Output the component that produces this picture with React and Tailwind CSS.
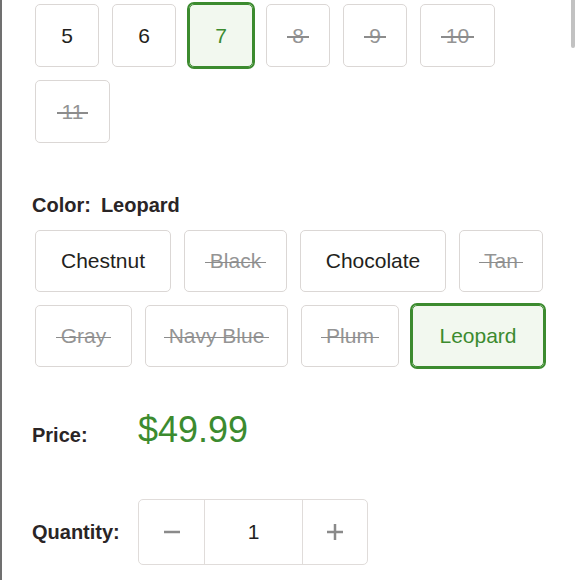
import { useState } from "react";

const sizes = [
  { label: "5", available: true, w: "w-[64px]" },
  { label: "6", available: true, w: "w-[64px]" },
  { label: "7", available: true, w: "w-[64px]" },
  { label: "8", available: false, w: "w-[64px]" },
  { label: "9", available: false, w: "w-[64px]" },
  { label: "10", available: false, w: "w-[75px]" },
  { label: "11", available: false, w: "w-[75px]" },
];

const colors = [
  { label: "Chestnut", available: true, w: "w-[136px]" },
  { label: "Black", available: false, w: "w-[103px]" },
  { label: "Chocolate", available: true, w: "w-[146px]" },
  { label: "Tan", available: false, w: "w-[84px]" },
  { label: "Gray", available: false, w: "w-[97px]" },
  { label: "Navy Blue", available: false, w: "w-[143px]" },
  { label: "Plum", available: false, w: "w-[98px]" },
  { label: "Leopard", available: true, w: "w-[132px]" },
];

function OptionButton({ label, available, selected, onClick, height, w }) {
  return (
    <button
      type="button"
      onClick={onClick}
      disabled={!available}
      className={`flex items-center justify-center rounded-[5px] border text-[21px] ${w} ${height} ${
        selected
          ? "border-[#3c8b2f] outline-2 outline-[#3c8b2f] bg-[#f2f8ef] text-[#3c8b2f]"
          : available
          ? "border-[#dbd7d5] bg-white text-[#231f20]"
          : "border-[#dbd7d5] bg-white text-[#949494]"
      }`}
    >
      {available ? (
        label
      ) : (
        <span className="relative after:absolute after:-left-[5px] after:-right-[5px] after:top-[52%] after:h-[1.5px] after:bg-[#8c8c8c]">
          {label}
        </span>
      )}
    </button>
  );
}

export default function App() {
  const [size, setSize] = useState("7");
  const [color, setColor] = useState("Leopard");
  const [qty, setQty] = useState(1);

  return (
    <div
      className="relative w-[580px] h-[580px] overflow-hidden bg-white border-l-2 border-[#707070]"
      style={{ fontFamily: '"Liberation Sans", Arial, Helvetica, sans-serif' }}
    >
      {/* scrollbar thumb */}
      <div className="absolute right-[5px] top-0 w-[4px] h-[48px] rounded-b-full bg-[#c2c2c2]" />

      <div className="pl-[30px] pt-[4px]">
        {/* Sizes */}
        <div className="pl-[3px] w-[520px] flex flex-wrap gap-x-[13px] gap-y-[13px]">
          {sizes.map((s) => (
            <OptionButton
              key={s.label}
              label={s.label}
              available={s.available}
              selected={size === s.label}
              onClick={() => setSize(s.label)}
              height="h-[63px]"
              w={s.w}
            />
          ))}
        </div>

        {/* Color */}
        <div className="mt-[50px] text-[20px] leading-[24px] font-bold text-[#2a2526]">
          Color:<span className="ml-[10px]">{color}</span>
        </div>
        <div className="mt-[13px] pl-[3px] w-[520px] flex flex-wrap gap-x-[13px] gap-y-[13px]">
          {colors.map((c) => (
            <OptionButton
              key={c.label}
              label={c.label}
              available={c.available}
              selected={color === c.label}
              onClick={() => setColor(c.label)}
              height="h-[62px]"
              w={c.w}
            />
          ))}
        </div>

        {/* Price */}
        <div className="mt-[43px] flex items-baseline">
          <div className="w-[106px] text-[20px] font-bold text-[#2a2526]">Price:</div>
          <div className="text-[36px] leading-[40px] text-[#3c8b2f]">$49.99</div>
        </div>

        {/* Quantity */}
        <div className="mt-[49px] flex items-center">
          <div className="w-[106px] text-[20px] font-bold text-[#2a2526]">Quantity:</div>
          <div className="flex h-[66px] border border-[#e0dcda] rounded-[5px]">
            <button
              type="button"
              onClick={() => setQty((q) => Math.max(1, q - 1))}
              className="w-[66px] flex items-center justify-center border-r border-[#e0dcda]"
            >
              <svg width="18" height="18" viewBox="0 0 18 18">
                <line x1="1" y1="9" x2="17" y2="9" stroke="#8a8a8a" strokeWidth="2.5" />
              </svg>
            </button>
            <div className="w-[97px] flex items-center justify-center text-[21px] text-[#231f20]">
              {qty}
            </div>
            <button
              type="button"
              onClick={() => setQty((q) => q + 1)}
              className="w-[65px] flex items-center justify-center border-l border-[#e0dcda]"
            >
              <svg width="18" height="18" viewBox="0 0 18 18">
                <line x1="1" y1="9" x2="17" y2="9" stroke="#8a8a8a" strokeWidth="2.5" />
                <line x1="9" y1="1" x2="9" y2="17" stroke="#8a8a8a" strokeWidth="2.5" />
              </svg>
            </button>
          </div>
        </div>
      </div>
    </div>
  );
}
